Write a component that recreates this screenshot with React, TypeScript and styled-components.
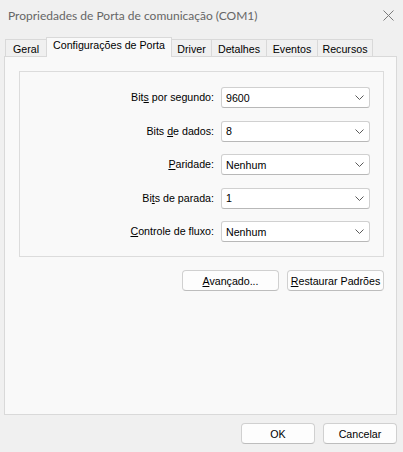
import React from "react";
import styled, { createGlobalStyle } from "styled-components";

const GlobalStyle = createGlobalStyle`
  html, body {
    margin: 0;
    padding: 0;
    background: #f0f0f0;
  }
  body {
    font-family: "Liberation Sans", Arial, sans-serif;
    font-size: 8pt;
    color: #000;
  }
`;

const Window = styled.div`
  width: 403px;
  height: 452px;
  display: flex;
  flex-direction: column;
  background: #f0f0f0;
  overflow: hidden;
`;

const TitleBar = styled.div`
  height: 30px;
  flex: none;
  display: flex;
  align-items: center;
  justify-content: space-between;
  padding: 0 8px;
  box-sizing: border-box;
`;

const Title = styled.span`
  font-family: Lato, "Noto Sans", sans-serif;
  font-size: 12px;
  color: #666;
`;

const CloseButton = styled.button`
  width: 12px;
  height: 12px;
  padding: 0;
  margin-right: 1px;
  border: none;
  background: transparent;
  display: flex;
  align-items: center;
  justify-content: center;
`;

const Content = styled.div`
  flex: 1;
  display: flex;
  flex-direction: column;
  padding: 7px 6px 0 4px;
`;

const TabStrip = styled.div`
  display: flex;
  align-items: flex-end;
  height: 19px;
  padding-left: 1px;
  position: relative;
  z-index: 1;
`;

const Tab = styled.div<{ $active?: boolean; $width: number }>`
  box-sizing: border-box;
  width: ${(p) => p.$width}px;
  height: ${(p) => (p.$active ? "20px" : "17px")};
  margin-bottom: ${(p) => (p.$active ? "-1px" : "0")};
  padding-top: ${(p) => (p.$active ? "1px" : "3px")};
  text-align: center;
  border: 1px solid #d9d9d9;
  border-bottom: none;
  & + & {
    margin-left: -1px;
  }
  background: ${(p) => (p.$active ? "#f9f9f9" : "#f0f0f0")};
  position: relative;
  z-index: ${(p) => (p.$active ? 2 : 1)};
  white-space: nowrap;
`;

const Panel = styled.div`
  height: 359px;
  box-sizing: border-box;
  border: 1px solid #d9d9d9;
  background: #f9f9f9;
  padding: 14px 12px 0 14px;
  display: flex;
  flex-direction: column;
`;

const GroupBox = styled.div`
  height: 186px;
  box-sizing: border-box;
  border: 1px solid #dcdcdc;
  padding: 15px 13px 0 0;
  display: grid;
  grid-template-columns: 1fr 149px;
  grid-auto-rows: 21px;
  column-gap: 7px;
  row-gap: 12.5px;
`;

const Label = styled.label`
  display: block;
  line-height: 21px;
  text-align: right;
  white-space: nowrap;
`;

const Key = styled.span`
  text-decoration: underline;
  text-underline-offset: 1px;
`;

const Combo = styled.div`
  box-sizing: border-box;
  height: 21px;
  display: flex;
  align-items: center;
  justify-content: space-between;
  padding: 0 5px 0 4px;
  background: #fff;
  border: 1px solid #d0d0d0;
  border-bottom-color: #b8b8b8;
  border-radius: 3px;
`;

const ActionRow = styled.div`
  display: flex;
  justify-content: flex-end;
  gap: 8px;
  margin-top: 13px;
`;

const Button = styled.button<{ $width: number }>`
  box-sizing: border-box;
  width: ${(p) => p.$width}px;
  height: 21px;
  padding: 0;
  font: inherit;
  color: #000;
  background: #fdfdfd;
  border: 1px solid #d0d0d0;
  border-bottom-color: #bdbdbd;
  border-radius: 4px;
`;

const Footer = styled.div`
  display: flex;
  justify-content: flex-end;
  gap: 8px;
  padding-top: 8px;
`;

const Chevron = () => (
  <svg width="9" height="5" viewBox="0 0 9 5">
    <path d="M0.5 0.5 L4.5 4.5 L8.5 0.5" fill="none" stroke="#5a5a5a" strokeWidth="1" />
  </svg>
);

const CloseIcon = () => (
  <svg width="11" height="11" viewBox="0 0 11 11">
    <path d="M0.5 0.5 L10.5 10.5 M10.5 0.5 L0.5 10.5" stroke="#7a7a7a" strokeWidth="1" />
  </svg>
);

const tabs = [
  { name: "Geral", width: 42 },
  { name: "Configurações de Porta", width: 126 },
  { name: "Driver", width: 41 },
  { name: "Detalhes", width: 56 },
  { name: "Eventos", width: 52 },
  { name: "Recursos", width: 56 },
];

const settings: { label: React.ReactNode; value: string }[] = [
  { label: <>Bit<Key>s</Key> por segundo:</>, value: "9600" },
  { label: <>Bits <Key>d</Key>e dados:</>, value: "8" },
  { label: <><Key>P</Key>aridade:</>, value: "Nenhum" },
  { label: <>Bi<Key>t</Key>s de parada:</>, value: "1" },
  { label: <><Key>C</Key>ontrole de fluxo:</>, value: "Nenhum" },
];

export default function App() {
  return (
    <>
      <GlobalStyle />
      <Window>
        <TitleBar>
          <Title>Propriedades de Porta de comunicação (COM1)</Title>
          <CloseButton>
            <CloseIcon />
          </CloseButton>
        </TitleBar>
        <Content>
          <TabStrip>
            {tabs.map((t, i) => (
              <Tab key={t.name} $active={i === 1} $width={t.width}>
                {t.name}
              </Tab>
            ))}
          </TabStrip>
          <Panel>
            <GroupBox>
              {settings.map((s, i) => (
                <React.Fragment key={i}>
                  <Label>{s.label}</Label>
                  <Combo>
                    <span>{s.value}</span>
                    <Chevron />
                  </Combo>
                </React.Fragment>
              ))}
            </GroupBox>
            <ActionRow>
              <Button $width={97}>
                <Key>A</Key>vançado...
              </Button>
              <Button $width={97}>
                <Key>R</Key>estaurar Padrões
              </Button>
            </ActionRow>
          </Panel>
          <Footer>
            <Button $width={74}>OK</Button>
            <Button $width={74}>Cancelar</Button>
          </Footer>
        </Content>
      </Window>
    </>
  );
}
